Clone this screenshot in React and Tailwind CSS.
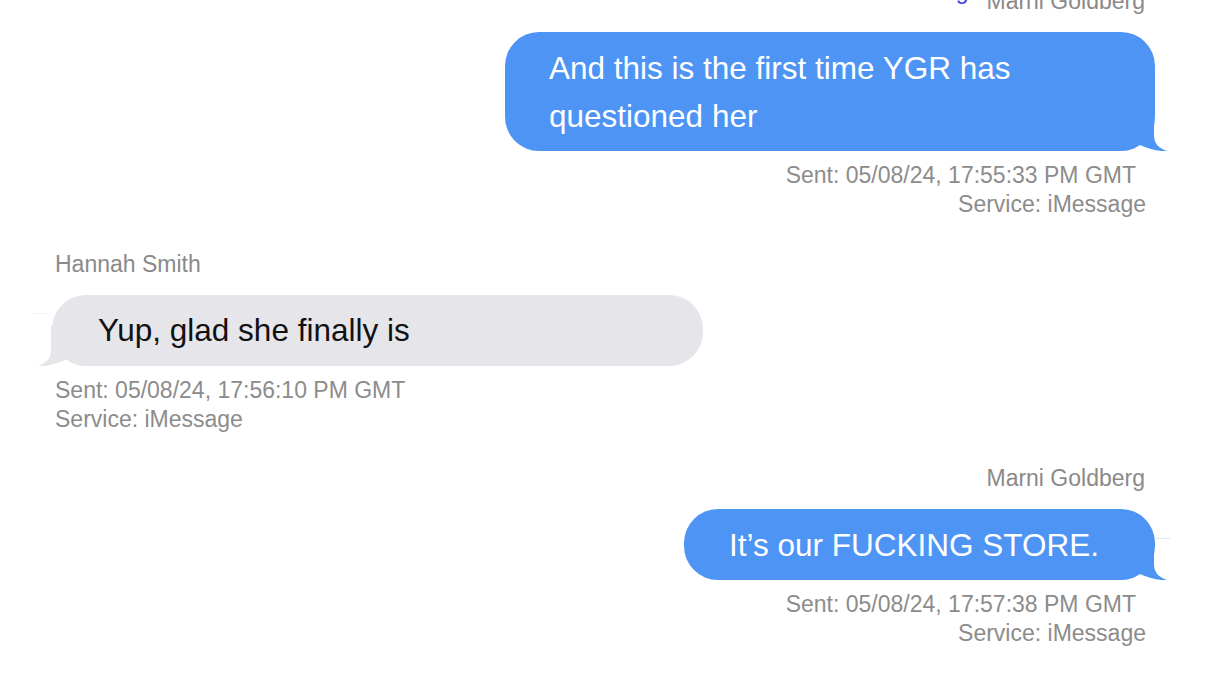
import React from 'react';

const BLUE = '#4d94f5';
const GRAY = '#e5e5ea';

// iMessage style tail, drawn for the outgoing side; mirrored for incoming
const Tail = ({ color, side }) => (
  <svg
    width="50"
    height="40"
    viewBox="0 0 50 40"
    className={
      side === 'right'
        ? 'absolute bottom-0 right-[-13px]'
        : 'absolute bottom-0 left-[-15px] -scale-x-100'
    }
  >
    <path
      d="M0,0 H36 V24 C36,32 40,37 49,40 C40,40.6 30,38 20,33 C14,37 8,40 0,40 Z"
      fill={color}
    />
  </svg>
);

const Meta = ({ sent, right }) => (
  <div
    className={
      right
        ? 'mt-[10px] flex flex-col items-end pr-[9px] text-[23px] leading-[29px] text-[#8c8c8c]'
        : 'mt-[10px] flex flex-col items-start pl-[3px] text-[23px] leading-[29px] text-[#8c8c8c]'
    }
  >
    <div className={right ? 'pr-[10px]' : ''}>Sent: {sent}</div>
    <div>Service: iMessage</div>
  </div>
);

const Outgoing = ({ name, text, sent, bubbleClass, seam, topRow }) => (
  <div className="flex flex-col items-end">
    {topRow ? (
      topRow
    ) : (
      <div className="pr-[10px] text-[23px] leading-[30px] text-[#8a8a8a]">{name}</div>
    )}
    <div
      className={`relative mt-[16px] rounded-[34px] bg-[#4d94f5] py-[11.5px] text-[31.5px] leading-[48px] text-white ${bubbleClass}`}
    >
      <span className="relative z-10">{text}</span>
      <Tail color={BLUE} side="right" />
      {seam && <div className="absolute right-[-15px] top-[29px] h-px w-[15px] bg-[#d9e7fc]" />}
    </div>
    <Meta sent={sent} right />
  </div>
);

const Incoming = ({ name, text, sent }) => (
  <div className="flex flex-col items-start">
    <div className="pl-[3px] text-[23px] leading-[30px] text-[#8a8a8a]">{name}</div>
    <div className="relative mt-[16px] w-[651px] rounded-[34px] bg-[#e5e5ea] py-[11.5px] pl-[46px] text-[31.5px] leading-[48px] text-[#111]">
      <span className="relative z-10">{text}</span>
      <Tail color={GRAY} side="left" />
      <div className="absolute left-[-20px] top-[18px] h-px w-[16px] bg-[#f3f3f6]" />
    </div>
    <Meta sent={sent} />
  </div>
);

export default function App() {
  return (
    <div className="h-screen w-full overflow-hidden bg-white font-['Liberation_Sans',Arial,sans-serif]">
      <div className="-mt-[14px] flex flex-col gap-[29.5px] pl-[52px] pr-[71px]">
        <Outgoing
          topRow={
            <div className="flex items-start gap-[18px] pr-[10px]">
              <span className="-mt-[10px] whitespace-nowrap text-[23px] leading-[30px] text-[#3b36e8]">
                Click to view the attachment that was shared in this thread between them including
              </span>
              <span className="text-[23px] leading-[30px] text-[#8a8a8a]">Marni Goldberg</span>
            </div>
          }
          text="And this is the first time YGR has questioned her"
          sent="05/08/24, 17:55:33 PM GMT"
          bubbleClass="max-w-[650px] px-[44px]"
        />
        <Incoming
          name="Hannah Smith"
          text="Yup, glad she finally is"
          sent="05/08/24, 17:56:10 PM GMT"
        />
        <Outgoing
          name="Marni Goldberg"
          text="It’s our FUCKING STORE."
          sent="05/08/24, 17:57:38 PM GMT"
          bubbleClass="pl-[45px] pr-[56px]"
          seam
        />
      </div>
    </div>
  );
}
